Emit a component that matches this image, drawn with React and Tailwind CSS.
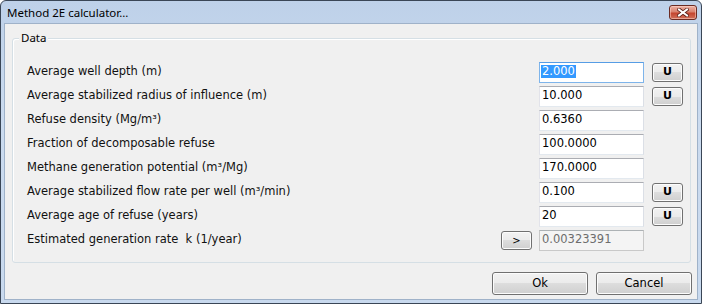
import React from "react";

const rows = [
  { label: "Average well depth (m)", value: "2.000", u: true, selected: true },
  { label: "Average stabilized radius of influence (m)", value: "10.000", u: true },
  { label: "Refuse density (Mg/m³)", value: "0.6360" },
  { label: "Fraction of decomposable refuse", value: "100.0000" },
  { label: "Methane generation potential (m³/Mg)", value: "170.0000" },
  { label: "Average stabilized flow rate per well (m³/min)", value: "0.100", u: true },
  { label: "Average age of refuse (years)", value: "20", u: true },
  { label: "Estimated generation rate  k (1/year)", value: "0.00323391", disabled: true, arrow: true },
];

const btn =
  "flex items-center justify-center border border-[#707070] rounded-[3px] bg-[linear-gradient(#f2f2f2,#ebebeb_50%,#dddddd_50%,#cfcfcf)] shadow-[inset_0_0_0_1px_#fcfcfc] text-black";

function Field({ value, selected, disabled }) {
  const border = selected
    ? "border-[#7eb4ea] border-t-[#569de5]"
    : disabled
    ? "border-[#c9c9c9] border-t-[#adb2b5]"
    : "border-[#e3e9ef] border-t-[#abadb3] border-l-[#e2e3ea] border-r-[#dbdfe6]";
  return (
    <div
      className={`w-[105px] h-[21px] border ${border} ${
        disabled ? "bg-[#f4f4f4] text-[#6d6d6d]" : "bg-white text-black"
      } pl-[1px] pt-[2px] leading-[13px] whitespace-nowrap overflow-hidden`}
    >
      {selected ? (
        <span className="bg-[#3399ff] text-white pl-[1px] pr-[1px] inline-block leading-[13px]">{value}</span>
      ) : (
        <span className="pl-[1px]">{value}</span>
      )}
    </div>
  );
}

export default function App() {
  return (
    <div className="w-[702px] h-[304px] border border-[#3a4656] rounded-t-[6px] bg-[linear-gradient(#bed1e9,#cbdbef_40%,#c8d9ee)] flex flex-col overflow-hidden">
      <div className="h-[22px] shrink-0 flex items-center justify-between">
        <span className="pl-[6px] pt-[1px] text-[11.5px] text-black font-['Noto_Sans',sans-serif]">
          Method 2E calculator...
        </span>
        <div className="mr-[4px] w-[28px] h-[15px] rounded-[3px] border border-[#6b2b22] bg-[linear-gradient(#eeb1a3,#d9826f_45%,#c4452f_55%,#d0705a)] shadow-[inset_0_0_0_1px_rgba(255,220,210,0.5)] flex items-center justify-center">
          <svg width="12" height="9" viewBox="0 0 12 9">
            <path d="M2 1.5 L10 7.5 M10 1.5 L2 7.5" stroke="#5a2018" strokeWidth="3.6" strokeLinecap="square" />
            <path d="M2 1.5 L10 7.5 M10 1.5 L2 7.5" stroke="#ffffff" strokeWidth="2" strokeLinecap="square" />
          </svg>
        </div>
      </div>
      <div className="flex-1 mx-[3px] mb-[3px] border border-[#9fb2c9] bg-[#f0f0f0] flex flex-col font-['DejaVu_Sans',sans-serif] text-[11.5px]">
        <div className="relative mt-[14px] ml-[7px] w-[679px] h-[225px] border border-[#d5dfe5] rounded-[3px] shadow-[inset_1px_1px_0_#ffffff] pt-[23px] pl-[14px] pr-[7px]">
          <span className="absolute -top-[9px] left-[6px] px-[2px] bg-[#f0f0f0] text-[11.5px] font-['Noto_Sans',sans-serif] text-black leading-[16px]">
            Data
          </span>
          <div className="flex flex-col gap-[3px]">
            {rows.map((r, i) => (
              <div key={i} className="flex items-center h-[21px]">
                <span className="flex-1 whitespace-pre text-[#111] leading-[13px] -mt-[2px]">{r.label}</span>
                {r.arrow && (
                  <div className={`${btn} w-[31px] h-[19px] mr-[7px] text-[10px] leading-none`}>&gt;</div>
                )}
                <Field value={r.value} selected={r.selected} disabled={r.disabled} />
                <div className="w-[31px] ml-[8px] h-[19px]">
                  {r.u && <div className={`${btn} w-[31px] h-[19px] font-bold text-[11px]`}>U</div>}
                </div>
              </div>
            ))}
          </div>
        </div>
        <div className="flex justify-end gap-[8px] mt-[9px] mr-[5px]">
          <div className={`${btn} w-[96px] h-[23px]`}>Ok</div>
          <div className={`${btn} w-[96px] h-[23px]`}>Cancel</div>
        </div>
      </div>
    </div>
  );
}
